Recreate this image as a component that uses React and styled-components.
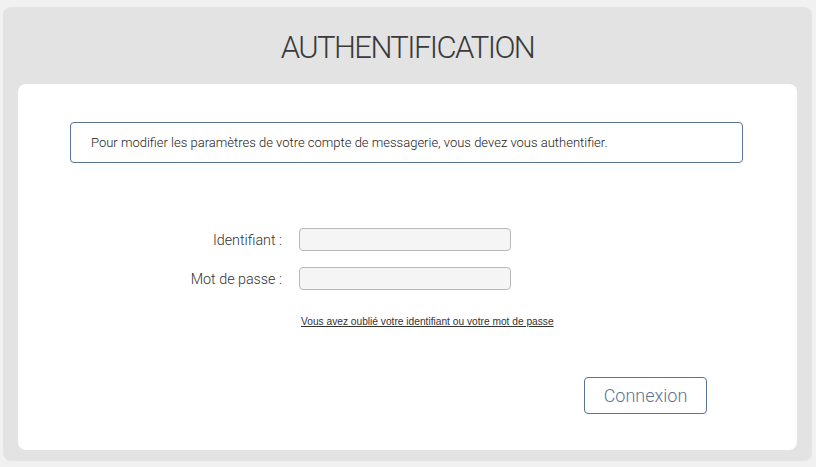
import React from 'react';
import styled, { createGlobalStyle } from 'styled-components';

const colors = {
  page: '#f1f1f1',
  panel: '#e3e3e3',
  white: '#ffffff',
  text: '#333333',
  blue: '#5a7490',
  inputBg: '#f5f5f5',
  inputBorder: '#b9b9b9',
};

const GlobalStyle = createGlobalStyle`
  html, body { margin: 0; padding: 0; background: ${colors.page}; }
  body { font-family: Roboto, 'Liberation Sans', sans-serif; color: ${colors.text}; }
  * { box-sizing: border-box; }
`;

/* ===== Cadre ===== */
const Page = styled.div`
  width: 816px; height: 467px;
  padding: 7px 4px 6px 3px;
`;

const Panel = styled.div`
  height: 100%;
  background: ${colors.panel};
  border-radius: 8px;
  padding: 0 15px 11px 15px;
  display: flex; flex-direction: column;
`;

const Title = styled.h1`
  margin: 0; height: 77px;
  display: flex; align-items: center; justify-content: center;
  padding-top: 4px;
  font-family: Roboto, sans-serif; font-weight: 300;
  font-size: 31px; letter-spacing: -1.6px;
  color: #3a3a3a;
`;

const Card = styled.div`
  flex: 1;
  background: ${colors.white};
  border-radius: 8px;
  padding: 38px 54px 0 52px;
  display: flex; flex-direction: column;
`;

/* ===== Message ===== */
const Notice = styled.div`
  height: 41px;
  border: 1px solid ${colors.blue};
  border-radius: 4px;
  padding: 0 20px;
  display: flex; align-items: center;
  font-size: 13px; font-weight: 300; color: #222;
`;

/* ===== Formulaire ===== */
const Form = styled.form`
  margin-top: 65px;
  display: grid;
  grid-template-columns: 212px 212px;
  column-gap: 17px; row-gap: 16px;
  align-items: center;
`;

const Label = styled.label`
  text-align: right;
  font-size: 14.3px; font-weight: 300; color: #333;
`;

const Input = styled.input`
  width: 212px; height: 23px;
  background: ${colors.inputBg};
  border: 1px solid ${colors.inputBorder};
  border-radius: 4px;
  outline: none;
`;

const ForgotLink = styled.a`
  align-self: flex-start;
  margin: 26px 0 0 231px;
  font-family: 'Liberation Sans', Arial, sans-serif;
  font-size: 10.2px; color: ${colors.text};
  text-decoration: underline;
`;

const Actions = styled.div`
  margin-top: 50px;
  display: flex; justify-content: flex-end;
  padding-right: 36px;
`;

const Button = styled.button`
  width: 123px; height: 37px;
  background: ${colors.white};
  border: 1px solid ${colors.blue};
  border-radius: 4px;
  font-family: Roboto, sans-serif; font-size: 18px; font-weight: 300;
  color: ${colors.blue};
  cursor: pointer;
`;

export default function App() {
  return (
    <>
      <GlobalStyle />
      <Page>
        <Panel>
          <Title>AUTHENTIFICATION</Title>
          <Card>
            <Notice>
              Pour modifier les paramètres de votre compte de messagerie, vous devez vous authentifier.
            </Notice>
            <Form>
              <Label htmlFor="login">Identifiant :</Label>
              <Input id="login" type="text" />
              <Label htmlFor="pwd">Mot de passe :</Label>
              <Input id="pwd" type="password" />
            </Form>
            <ForgotLink href="#">Vous avez oublié votre identifiant ou votre mot de passe</ForgotLink>
            <Actions>
              <Button type="button">Connexion</Button>
            </Actions>
          </Card>
        </Panel>
      </Page>
    </>
  );
}
